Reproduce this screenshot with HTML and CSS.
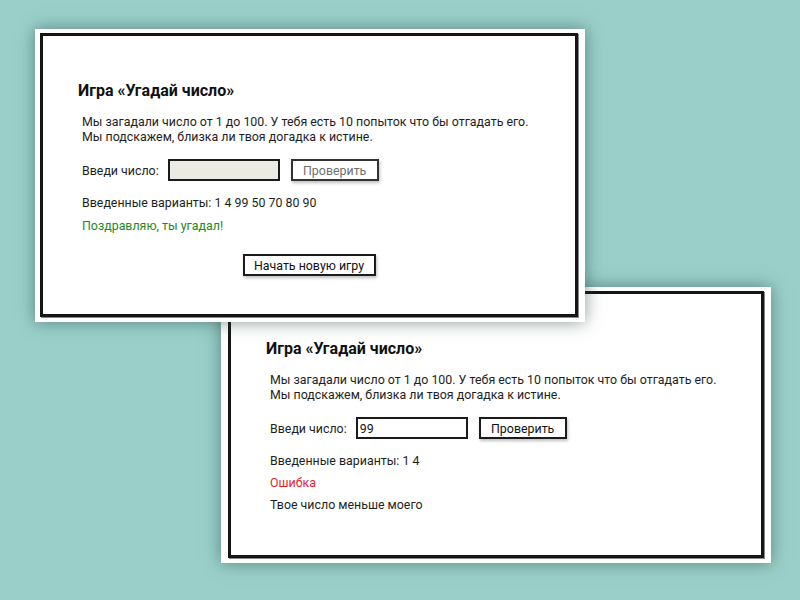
FILE: index.html
```html
<!DOCTYPE html>
<html lang="ru">
<head>
<meta charset="utf-8">
<title>Игра «Угадай число»</title>
<link rel="stylesheet" href="styles.css">
</head>
<body>
<div class="desk">
  <section class="window window-back">
    <div class="frame frame-back">
      <h2 class="title">Игра «Угадай число»</h2>
      <div class="body">
        <p class="intro">Мы загадали число от 1 до 100. У тебя есть 10 попыток что бы отгадать его.<br>Мы подскажем, близка ли твоя догадка к истине.</p>
        <div class="row">
          <label class="label">Введи число:</label>
          <input class="field" type="text" value="99">
          <button class="btn">Проверить</button>
        </div>
        <p class="line guesses">Введенные варианты: 1 4</p>
        <p class="line error">Ошибка</p>
        <p class="line hint">Твое число меньше моего</p>
      </div>
    </div>
  </section>
  <section class="window window-front">
    <div class="frame frame-front">
      <h2 class="title">Игра «Угадай число»</h2>
      <div class="body">
        <p class="intro">Мы загадали число от 1 до 100. У тебя есть 10 попыток что бы отгадать его.<br>Мы подскажем, близка ли твоя догадка к истине.</p>
        <div class="row">
          <label class="label">Введи число:</label>
          <input class="field" type="text" value="" disabled>
          <button class="btn" disabled>Проверить</button>
        </div>
        <p class="line guesses">Введенные варианты: 1 4 99 50 70 80 90</p>
        <p class="line success">Поздравляю, ты угадал!</p>
        <div class="center">
          <button class="btn btn-wide">Начать новую игру</button>
        </div>
      </div>
    </div>
  </section>
</div>
</body>
</html>
```

FILE: styles.css
```css
* { box-sizing: border-box; }
html, body { margin: 0; padding: 0; }
body {
  background: #9acfc9;
  font-family: Roboto, "Liberation Sans", sans-serif;
  color: #1e1e1e;
}
.desk {
  position: relative;
  width: 800px;
  height: 600px;
  overflow: hidden;
}
.window {
  position: absolute;
  width: 550px;
  background: #fff;
  padding: 4px 7px 5px 5px;
  display: flex;
  box-shadow: 0 0 16px rgba(40, 70, 66, 0.55);
}
.window-front { left: 35px; top: 29px; height: 293px; z-index: 2; }
.window-back { left: 221px; top: 287px; height: 276px; padding: 4px 7px 5px 7px; }
.frame {
  flex: 1;
  border: 3px solid #151515;
  box-shadow: 1px 1px 0 #888;
  padding: 45px 20px 0 35px;
}
.title {
  margin: 0;
  font-size: 16px;
  line-height: 20px;
  font-weight: 700;
  color: #111;
}
.body { margin-left: 4px; }
.intro {
  margin: 13px 0 0;
  font-size: 12.4px;
  line-height: 15px;
  white-space: nowrap;
}
.row {
  display: flex;
  align-items: center;
  margin-top: 15px;
  font-size: 12.4px;
}
.label { margin-right: 9px; }
.field {
  width: 112px;
  height: 22px;
  border: 2px solid #1b1b1b;
  background: #fff;
  font: 12.4px Roboto, "Liberation Sans", sans-serif;
  color: #111;
  padding: 0 2px;
  margin: 0 11px 0 0;
}
.field:disabled { background: #ebebe4; }
.btn {
  height: 22px;
  width: 88px;
  border: 2px solid #1b1b1b;
  background: #fff;
  font: 12.4px Roboto, "Liberation Sans", sans-serif;
  color: #111;
  padding: 0;
  box-shadow: 1px 2px 3px rgba(0, 0, 0, 0.25);
}
.btn:disabled { color: #6f6f6f; border-color: #333; }
.btn-wide { width: 133px; }
.line {
  margin: 0;
  font-size: 12.4px;
  line-height: 16px;
  white-space: nowrap;
}
.guesses { margin-top: 14px; }
.success { margin-top: 7px; color: #218a21; }
.error { margin-top: 6px; color: #e3252b; }
.hint { margin-top: 6px; }
.center {
  display: flex;
  justify-content: center;
  margin-top: 20px;
  margin-left: -39px;
  margin-right: -20px;
}
```
